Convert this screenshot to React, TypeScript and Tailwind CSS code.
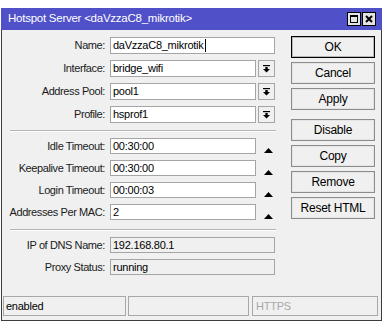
import type { ReactNode } from 'react'

const font = "font-['Liberation_Sans',Arial,sans-serif] text-[11px] tracking-[-0.25px]"

function Label({ children }: { children: ReactNode }) {
  return <div className="w-[104px] shrink-0 text-right text-[#1a1a1a] leading-none pr-[1px] tracking-[-0.4px]">{children}</div>
}

function DropIcon() {
  return (
    <svg width="7" height="8" viewBox="0 0 7 8">
      <rect x="0" y="0" width="7" height="1.2" fill="#000" />
      <rect x="2.3" y="2" width="2.4" height="2.2" fill="#000" />
      <polygon points="0,4 7,4 3.5,7.6" fill="#000" />
    </svg>
  )
}

function UpIcon() {
  return (
    <svg width="9" height="5" viewBox="0 0 9 5">
      <polygon points="0,5 9,5 4.5,0" fill="#000" />
    </svg>
  )
}

function TextRow({ label, value, caret }: { label: string; value: string; caret?: boolean }) {
  return (
    <div className="flex items-center gap-[4px] h-[17px]">
      <Label>{label}</Label>
      <div className="w-[165px] h-[17px] border border-[#a5a5a5] bg-white pl-[2px] flex items-center text-black">
        <span>{value}</span>
        {caret && <span className="w-[1px] h-[13px] bg-black ml-[1px]" />}
      </div>
    </div>
  )
}

function SelectRow({ label, value }: { label: string; value: string }) {
  return (
    <div className="flex items-center gap-[4px] h-[17px]">
      <Label>{label}</Label>
      <div className="flex gap-[2px]">
        <div className="w-[146px] h-[17px] border border-[#a5a5a5] bg-white pl-[2px] flex items-center text-black">
          {value}
        </div>
        <div className="w-[17px] h-[17px] border border-[#a5a5a5] bg-[#f0f0f0] flex items-center justify-center">
          <DropIcon />
        </div>
      </div>
    </div>
  )
}

function SpinRow({ label, value }: { label: string; value: string }) {
  return (
    <div className="flex items-center gap-[4px] h-[16px]">
      <Label>{label}</Label>
      <div className="w-[146px] h-[16px] border border-[#a5a5a5] bg-white pl-[2px] flex items-center text-black">
        {value}
      </div>
      <div className="w-[17px] h-[16px] flex items-end justify-center pb-[1px]">
        <UpIcon />
      </div>
    </div>
  )
}

function ReadRow({ label, value }: { label: string; value: string }) {
  return (
    <div className="flex items-center gap-[4px] h-[16px]">
      <Label>{label}</Label>
      <div className="w-[165px] h-[16px] border border-[#a5a5a5] bg-[#f0f0f0] pl-[2px] flex items-center text-black">
        {value}
      </div>
    </div>
  )
}

function Separator() {
  return (
    <div className="ml-[8px] w-[266px]">
      <div className="h-[1px] bg-[#b4b4b4]" />
      <div className="h-[1px] bg-white" />
    </div>
  )
}

function Btn({ children, main }: { children: ReactNode; main?: boolean }) {
  return (
    <div
      className={
        main
          ? 'w-[84px] h-[22px] border border-black bg-[#f0f0f0] shadow-[inset_0_0_0_1px_#b8b8b8] flex items-center justify-center text-black text-[12px]'
          : 'w-[84px] h-[22px] border border-[#8c8c8c] bg-[#f0f0f0] shadow-[inset_0_0_0_1px_#e4e4e4] flex items-center justify-center text-black text-[12px]'
      }
    >
      {children}
    </div>
  )
}

export default function App() {
  return (
    <div className={`min-h-screen bg-white pt-[8px] pl-[1px] ${font}`}>
      <div className="w-[381px]">
        <div className="h-[22px] bg-[#5050c8] flex items-center pl-[7px] pr-[6px] text-white">
          <span className="text-[11.5px]">Hotspot Server &lt;daVzzaC8_mikrotik&gt;</span>
          <div className="ml-auto flex gap-[1px]">
            <div className="w-[14px] h-[14px] border border-black bg-[#e4e4e4] flex items-center justify-center">
              <div className="w-[8px] h-[8px] border border-black border-t-2" />
            </div>
            <div className="w-[14px] h-[14px] border border-black bg-[#e4e4e4] flex items-center justify-center">
              <svg width="8" height="8" viewBox="0 0 8 8">
                <path d="M1 1 L7 7 M7 1 L1 7" stroke="#000" strokeWidth="2" />
              </svg>
            </div>
          </div>
        </div>

        <div className="h-[291px] border-x border-b border-[#3c3c3c] bg-[#f0f0f0] flex flex-col">
          <div className="flex flex-1">
            <div className="w-[283px] pt-[7px] flex flex-col">
              <div className="flex flex-col gap-[6px]">
                <TextRow label="Name:" value="daVzzaC8_mikrotik" caret />
                <SelectRow label="Interface:" value="bridge_wifi" />
                <SelectRow label="Address Pool:" value="pool1" />
                <SelectRow label="Profile:" value="hsprof1" />
              </div>
              <div className="mt-[7px] mb-[6px]">
                <Separator />
              </div>
              <div className="flex flex-col gap-[6px]">
                <SpinRow label="Idle Timeout:" value="00:30:00" />
                <SpinRow label="Keepalive Timeout:" value="00:30:00" />
                <SpinRow label="Login Timeout:" value="00:00:03" />
                <SpinRow label="Addresses Per MAC:" value="2" />
              </div>
              <div className="mt-[9px] mb-[6px]">
                <Separator />
              </div>
              <div className="flex flex-col gap-[6px]">
                <ReadRow label="IP of DNS Name:" value="192.168.80.1" />
                <ReadRow label="Proxy Status:" value="running" />
              </div>
            </div>

            <div className="ml-[6px] pt-[6px] flex flex-col">
              <div className="flex flex-col gap-[4px]">
                <Btn main>OK</Btn>
                <Btn>Cancel</Btn>
                <Btn>Apply</Btn>
              </div>
              <div className="mt-[9px] flex flex-col gap-[4px]">
                <Btn>Disable</Btn>
                <Btn>Copy</Btn>
                <Btn>Remove</Btn>
                <Btn>Reset HTML</Btn>
              </div>
            </div>
          </div>

          <div className="flex pl-[1px] pb-[4px]">
            <div className="w-[123px] h-[20px] border border-[#a8a8a8] pl-[2px] flex items-center text-black">enabled</div>
            <div className="ml-[2px] w-[121px] h-[20px] border border-[#a8a8a8]" />
            <div className="ml-[3px] w-[126px] h-[20px] border border-[#a8a8a8] pl-[3px] flex items-center text-[#a8a8a8]">
              HTTPS
            </div>
          </div>
        </div>
      </div>
    </div>
  )
}
